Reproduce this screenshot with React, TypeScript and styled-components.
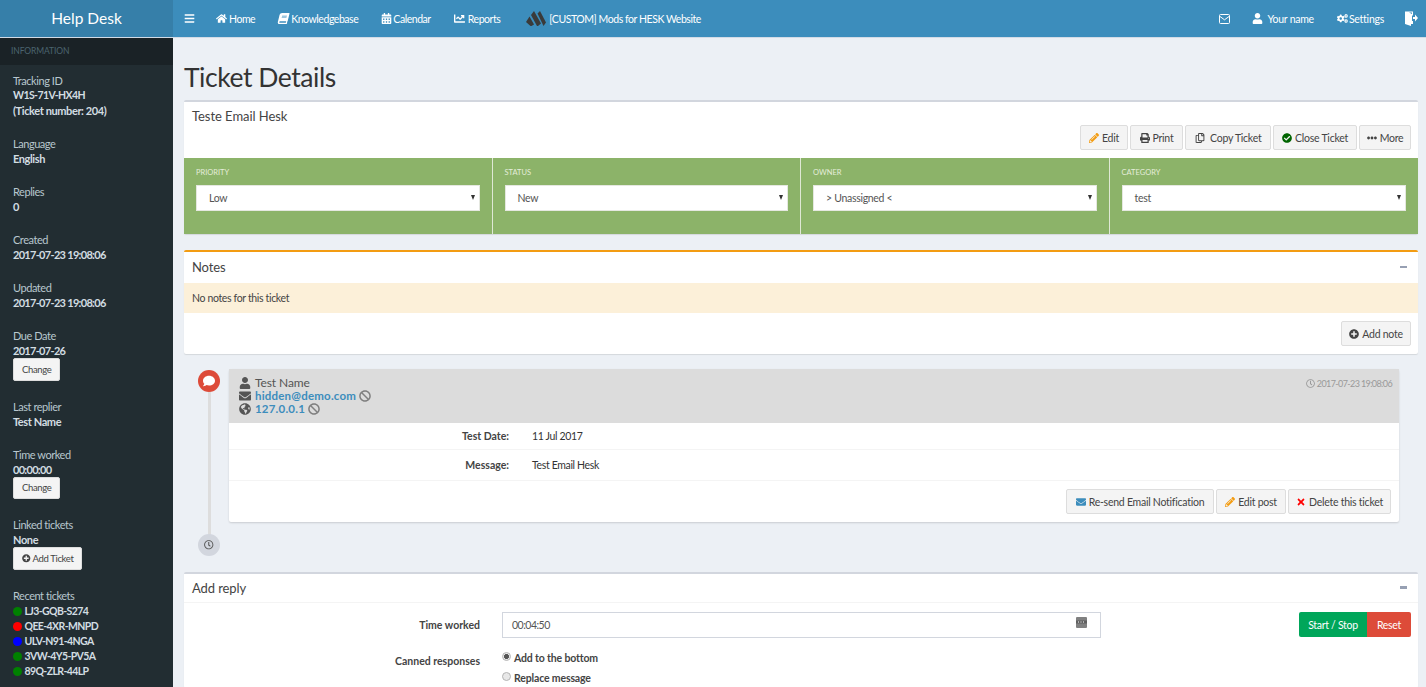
import React from 'react'
import styled, { createGlobalStyle } from 'styled-components'
import {
  FaBars, FaHome, FaBook, FaCalendarAlt, FaChartLine, FaUser, FaCogs, FaPencilAlt, FaPrint, FaRegCopy,
  FaCheckCircle, FaEllipsisH, FaPlusCircle, FaTimes, FaComment, FaRegClock, FaGlobeAmericas, FaBan, FaEnvelope,
} from 'react-icons/fa'

const GlobalStyle = createGlobalStyle`
  html, body {
    margin: 0;
    height: 100%;
    overflow: hidden;
    background: #ecf0f5;
    font-family: Lato, "Liberation Sans", sans-serif;
    font-size: 11.5px;
    color: #333;
  }
  * { box-sizing: border-box; }
`

const Page = styled.div`
  height: 687px;
  overflow: hidden;
  display: flex;
  flex-direction: column;
`

const TopBar = styled.header`
  flex: none;
  height: 38px;
  display: flex;
  background: #3c8dbc;
  border-bottom: 1px solid #d2dbe6;
  color: #fff;
`

const Brand = styled.div`
  width: 173px;
  background: #367fa9;
  font-size: 15.5px;
  text-align: center;
  line-height: 36px;
`

const NavList = styled.nav`
  flex: 1;
  display: flex;
  align-items: center;
  padding: 0 8px 0 11px;
  font-size: 10.5px;
  letter-spacing: -0.45px;
`

const NavItem = styled.span<{ $gap?: number; $iconGap?: number; $wide?: boolean }>`
  display: inline-flex;
  align-items: center;
  gap: ${p => p.$iconGap ?? 2}px;
  margin-right: ${p => p.$gap ?? 23}px;
  white-space: nowrap;
  ${p => (p.$wide ? 'letter-spacing: -0.25px;' : '')}
  & > svg { height: 11px; width: auto; }
`

const SlantBook = styled(FaBook)`
  transform: skewX(-14deg);
`

const Spacer = styled.div`
  flex: 1;
`

const Body = styled.div`
  flex: 1;
  display: flex;
  min-height: 0;
`

const Sidebar = styled.aside`
  flex: none;
  width: 173px;
  background: #222d32;
  color: #b8c7ce;
`

const SideHeading = styled.div`
  height: 27px;
  line-height: 27px;
  padding-left: 11px;
  background: #1a2226;
  color: #4b646f;
  font-size: 8.5px;
  letter-spacing: -0.1px;
  text-transform: uppercase;
  margin-bottom: 8px;
`

const SideBlock = styled.div`
  padding: 0 13px;
  margin-bottom: 18px;
  line-height: 15px;
  font-size: 11px;
  letter-spacing: -0.45px;
`

const SideValue = styled.div<{ $tight?: boolean }>`
  font-weight: 700;
  color: #d3dde2;
  display: flex;
  align-items: center;
  gap: 2.5px;
  white-space: nowrap;
  letter-spacing: ${p => (p.$tight ? -0.7 : -0.4)}px;
`

const TicketCode = styled(SideValue)`
  font-size: 10.5px;
  letter-spacing: -0.6px;
`

const CodeList = styled.div`
  padding-top: 1px;
`

const Dot = styled.span<{ $color: string }>`
  flex: none;
  width: 9px;
  height: 9px;
  border-radius: 50%;
  background: ${p => p.$color};
`

const SmallButton = styled.button`
  display: flex;
  align-items: center;
  gap: 2px;
  height: 22.5px;
  margin: 0;
  padding: 0 8px;
  background: #f4f4f4;
  border: 1px solid #ddd;
  border-radius: 2px;
  color: #444;
  font: 400 9.5px Lato, sans-serif;
  letter-spacing: -0.35px;
  svg { width: 8.5px; height: 8.5px; }
`

const Main = styled.main`
  flex: 1;
  padding: 0 8px 0 11px;
  min-width: 0;
`

const Title = styled.h1`
  margin: 0;
  padding-top: 23px;
  height: 62px;
  font-size: 26.5px;
  line-height: 32px;
  font-weight: 400;
  letter-spacing: -0.45px;
  color: #333;
`

const Box = styled.section<{ $accent?: string; $gap?: number }>`
  background: #fff;
  border-top: 2px solid ${p => p.$accent ?? '#d2d6de'};
  box-shadow: 0 1px 1px rgba(0, 0, 0, 0.1);
  margin-bottom: ${p => p.$gap ?? 16}px;
  border-radius: 2px;
`

const TicketTop = styled.div`
  height: 56px;
  padding: 6px 7px 0 8px;
  font-size: 13px;
  letter-spacing: -0.05px;
  color: #444;
  display: flex;
  flex-direction: column;
`

const ButtonRow = styled.div`
  display: flex;
  justify-content: flex-end;
  gap: 2px;
  margin-top: 1px;
`

const ActionButton = styled.button<{ $w: number }>`
  height: 25px;
  width: ${p => p.$w}px;
  padding: 0;
  display: inline-flex;
  align-items: center;
  justify-content: center;
  gap: 3px;
  background: #f4f4f4;
  border: 1px solid #ddd;
  border-radius: 2px;
  color: #444;
  font: 400 10.5px Lato, sans-serif;
  letter-spacing: -0.25px;
  white-space: nowrap;
  svg { height: 10px; width: auto; }
`

const Tint = styled.span<{ $color: string }>`
  display: inline-flex;
  color: ${p => p.$color};
`

const GreenRow = styled.div`
  display: grid;
  grid-template-columns: repeat(4, 1fr);
  height: 76px;
  background: #8cb369;
`

const FieldCell = styled.div`
  padding: 10px 12px 0;
  border-right: 1px solid #dfe8d5;
  &:last-child { border-right: 0; }
`

const FieldLabel = styled.div`
  color: #e4edda;
  font-size: 7.5px;
  line-height: 9px;
  text-transform: uppercase;
  margin-bottom: 8px;
`

const FakeSelect = styled.div`
  position: relative;
  height: 26px;
  line-height: 25px;
  padding-left: 12px;
  background: #fff;
  border: 1px solid #e5e8e0;
  color: #555;
  font-size: 10.5px;
  letter-spacing: -0.3px;
  &::after {
    content: '';
    position: absolute;
    right: 4px;
    top: 9px;
    border: 2.5px solid transparent;
    border-top: 5px solid #333;
  }
`

const BoxHeader = styled.div<{ $line?: boolean }>`
  height: ${p => (p.$line ? 29 : 31)}px;
  padding: 0 11px 1px 8px;
  display: flex;
  align-items: center;
  justify-content: space-between;
  font-size: 13px;
  letter-spacing: -0.1px;
  color: #444;
  border-bottom: ${p => (p.$line ? '1px solid #f4f4f4' : '0')};
`

const MinusMark = styled.span`
  width: 7.5px;
  height: 2.5px;
  background: #97a0b3;
`

const NotesRow = styled.div`
  height: 30px;
  line-height: 30px;
  padding-left: 8px;
  background: #fcf0d9;
  font-size: 10.5px;
  letter-spacing: -0.35px;
  color: #444;
`

const NotesFoot = styled.div`
  height: 41px;
  padding: 8px 7px 0;
  display: flex;
  justify-content: flex-end;
`

const Timeline = styled.div`
  position: relative;
  padding: 0 19px 0 45px;
  height: 203px;
  &::before {
    content: '';
    position: absolute;
    left: 23.5px;
    top: 12px;
    width: 3px;
    height: 156px;
    background: #ddd;
  }
`

const TimelineDot = styled.div<{ $color: string; $top: number; $fg: string; $size: number }>`
  position: absolute;
  left: 14px;
  top: ${p => p.$top}px;
  width: 22px;
  height: 22px;
  border-radius: 50%;
  background: ${p => p.$color};
  color: ${p => p.$fg};
  font-size: ${p => p.$size}px;
  display: flex;
  align-items: center;
  justify-content: center;
`

const Card = styled.article`
  background: #fff;
  box-shadow: 0 1px 2px rgba(0, 0, 0, 0.15);
  border-radius: 2px;
`

const CardHead = styled.div`
  height: 54px;
  padding: 7px 7px 0 10px;
  background: #dcdcdc;
  display: flex;
  justify-content: space-between;
`

const ContactLine = styled.div`
  display: flex;
  align-items: center;
  gap: 3px;
  height: 13px;
  font-size: 12px;
  letter-spacing: -0.1px;
  color: #555;
  & > svg:first-child { width: 12px; height: 12px; margin-right: 1px; }
`

const ContactLink = styled.a`
  color: #3c8dbc;
  font-weight: 700;
  font-size: 11.5px;
  letter-spacing: 0.2px;
`

const Stamp = styled.div`
  display: flex;
  align-items: center;
  gap: 2px;
  height: 14px;
  color: #999;
  font-size: 9px;
  letter-spacing: -0.6px;
`

const InfoRow = styled.div<{ $h: number }>`
  height: ${p => p.$h}px;
  display: grid;
  grid-template-columns: 280px 1fr;
  column-gap: 23px;
  align-items: center;
  border-bottom: 1px solid #f4f4f4;
  font-size: 10.5px;
  letter-spacing: -0.35px;
`

const FieldName = styled.div`
  text-align: right;
  font-weight: 700;
  color: #444;
  font-size: 10.5px;
  letter-spacing: 0;
`

const CardFoot = styled.div`
  padding: 7px 8px 8px;
`

const ReplyRow = styled.div`
  display: grid;
  grid-template-columns: 296px 599px 1fr;
  column-gap: 22px;
  align-items: center;
  height: 25px;
  margin-top: 9px;
`

const TimeInput = styled.div`
  height: 25.5px;
  padding: 0 13px 0 9px;
  display: flex;
  align-items: center;
  justify-content: space-between;
  border: 1px solid #d2d6de;
  font-size: 10.5px;
  letter-spacing: -0.5px;
  color: #555;
`

const TimerButtons = styled.div`
  display: flex;
  justify-content: flex-end;
  padding-right: 7px;
`

const TimerButton = styled.button<{ $color: string; $w: number }>`
  width: ${p => p.$w}px;
  height: 25px;
  border: 0;
  padding: 0;
  background: ${p => p.$color};
  color: #fff;
  font: 400 10.5px Lato, sans-serif;
  letter-spacing: -0.3px;
  &:first-child { border-radius: 2px 0 0 2px; }
  &:last-child { border-radius: 0 2px 2px 0; }
`

const CannedRow = styled.div`
  display: grid;
  grid-template-columns: 296px 1fr;
  column-gap: 22px;
  margin-top: 11px;
`

const CannedName = styled(FieldName)`
  padding-top: 7px;
`

const RadioGroup = styled.div`
  display: flex;
  flex-direction: column;
`

const RadioLine = styled.label`
  display: flex;
  align-items: center;
  gap: 3px;
  height: 20px;
  font-weight: 700;
  font-size: 10.5px;
  letter-spacing: -0.15px;
  color: #444;
`

const RadioInput = styled.input`
  appearance: none;
  margin: 0;
  width: 9px;
  height: 9px;
  position: relative;
  top: -1.5px;
  border: 1px solid #b4b4b4;
  border-radius: 50%;
  background: #e8e8e8;
  &:checked { background: radial-gradient(circle, #555 0 2.2px, #e8e8e8 2.8px); }
`

const DoorSvg = styled.svg`
  && { width: 13px; height: 15px; }
`

const LogoSvg = styled.svg`
  && { width: 20px; height: 15px; margin-right: 1px; }
`

const InboxSvg = styled.svg`
  && { width: 11px; height: 10px; }
`

const Door = () => (
  <DoorSvg viewBox="0 0 13 15" fill="#fff">
    <path d="M0 0.5h8v4H7V1.5H4L7 3v7h1v3H6v2L0 13z" />
    <path d="M8 6h2V3.5L13 7l-3 3.5V8H8z" />
  </DoorSvg>
)

const ModsLogo = () => (
  <LogoSvg viewBox="0 0 20 15" fill="#3a3a3a">
    <path d="M0 11 3.5 5.5 8 13.5 5.5 15H4.5z" />
    <path d="M5 4 8 0 15 12.5 12 15H11z" />
    <path d="M11.5 2.5 14 0 20 11.5 17.5 15z" />
  </LogoSvg>
)

const InboxIcon = () => (
  <InboxSvg viewBox="0 0 11 10" fill="none" stroke="#fff" strokeWidth="1">
    <rect x="0.5" y="0.5" width="10" height="9" rx="1" />
    <path d="M1 2.5 5.5 5.8 10 2.5" />
  </InboxSvg>
)

const PickerIcon = () => (
  <svg width="11" height="11" viewBox="0 0 11 11" style={{ marginTop: -4 }}>
    <rect width="11" height="11" rx="1" fill="#808080" />
    <rect y="3.5" width="11" height="3" fill="#5f5f5f" />
    <path d="M2 5h1M4.5 5h1M7 5h1" stroke="#fff" strokeWidth="1" />
  </svg>
)

const recent: [string, string][] = [
  ['green', 'LJ3-GQB-S274'],
  ['red', 'QEE-4XR-MNPD'],
  ['blue', 'ULV-N91-4NGA'],
  ['green', '3VW-4Y5-PV5A'],
  ['green', '89Q-ZLR-44LP'],
]

const fields: [string, string][] = [
  ['Priority', 'Low'],
  ['Status', 'New'],
  ['Owner', '> Unassigned <'],
  ['Category', 'test'],
]

export default function App() {
  return (
    <Page>
      <GlobalStyle />
      <TopBar>
        <Brand>Help Desk</Brand>
        <NavList>
          <NavItem $gap={21}><FaBars /></NavItem>
          <NavItem><FaHome />Home</NavItem>
          <NavItem><SlantBook />Knowledgebase</NavItem>
          <NavItem $iconGap={1}><FaCalendarAlt />Calendar</NavItem>
          <NavItem $gap={26} $iconGap={3}><FaChartLine />Reports</NavItem>
          <NavItem><ModsLogo />[CUSTOM] Mods for HESK Website</NavItem>
          <Spacer />
          <NavItem $gap={22}><InboxIcon /></NavItem>
          <NavItem $wide><FaUser />&nbsp;Your name</NavItem>
          <NavItem $gap={21} $iconGap={1} $wide><FaCogs />Settings</NavItem>
          <NavItem $gap={0}><Door /></NavItem>
        </NavList>
      </TopBar>
      <Body>
        <Sidebar>
          <SideHeading>Information</SideHeading>
          <SideBlock>Tracking ID<TicketCode>W1S-71V-HX4H</TicketCode><SideValue>(Ticket number: 204)</SideValue></SideBlock>
          <SideBlock>Language<SideValue>English</SideValue></SideBlock>
          <SideBlock>Replies<SideValue>0</SideValue></SideBlock>
          <SideBlock>Created<SideValue $tight>2017-07-23 19:08:06</SideValue></SideBlock>
          <SideBlock>Updated<SideValue $tight>2017-07-23 19:08:06</SideValue></SideBlock>
          <SideBlock>Due Date<SideValue $tight>2017-07-26</SideValue><SmallButton>Change</SmallButton></SideBlock>
          <SideBlock>Last replier<SideValue>Test Name</SideValue></SideBlock>
          <SideBlock>Time worked<SideValue $tight>00:00:00</SideValue><SmallButton>Change</SmallButton></SideBlock>
          <SideBlock>Linked tickets<SideValue>None</SideValue><SmallButton><FaPlusCircle />Add Ticket</SmallButton></SideBlock>
          <SideBlock>
            Recent tickets
            <CodeList>
              {recent.map(([color, id]) => (
                <TicketCode key={id}><Dot $color={color} />{id}</TicketCode>
              ))}
            </CodeList>
          </SideBlock>
        </Sidebar>
        <Main>
          <Title>Ticket Details</Title>
          <Box>
            <TicketTop>
              Teste Email Hesk
              <ButtonRow>
                <ActionButton $w={48}><Tint $color="#f39c12"><FaPencilAlt /></Tint>Edit</ActionButton>
                <ActionButton $w={53}><FaPrint />Print</ActionButton>
                <ActionButton $w={86}><FaRegCopy />&nbsp;Copy Ticket</ActionButton>
                <ActionButton $w={84}><Tint $color="#006400"><FaCheckCircle /></Tint>Close Ticket</ActionButton>
                <ActionButton $w={52}><FaEllipsisH />More</ActionButton>
              </ButtonRow>
            </TicketTop>
            <GreenRow>
              {fields.map(([label, value]) => (
                <FieldCell key={label}>
                  <FieldLabel>{label}</FieldLabel>
                  <FakeSelect>{value}</FakeSelect>
                </FieldCell>
              ))}
            </GreenRow>
          </Box>
          <Box $accent="#f39c12" $gap={15}>
            <BoxHeader>Notes<MinusMark /></BoxHeader>
            <NotesRow>No notes for this ticket</NotesRow>
            <NotesFoot>
              <ActionButton $w={70}><FaPlusCircle />Add note</ActionButton>
            </NotesFoot>
          </Box>
          <Timeline>
            <TimelineDot $color="#dd4b39" $fg="#fff" $top={1} $size={12}><FaComment /></TimelineDot>
            <TimelineDot $color="#d2d6de" $fg="#555" $top={165} $size={9.5}><FaRegClock /></TimelineDot>
            <Card>
              <CardHead>
                <div>
                  <ContactLine><FaUser />Test Name</ContactLine>
                  <ContactLine><FaEnvelope /><ContactLink>hidden@demo.com</ContactLink><FaBan color="#808080" /></ContactLine>
                  <ContactLine><FaGlobeAmericas /><ContactLink>127.0.0.1</ContactLink><FaBan color="#808080" /></ContactLine>
                </div>
                <Stamp><FaRegClock />2017-07-23 19:08:06</Stamp>
              </CardHead>
              <InfoRow $h={27}><FieldName>Test Date:</FieldName>11 Jul 2017</InfoRow>
              <InfoRow $h={31}><FieldName>Message:</FieldName>Test Email Hesk</InfoRow>
              <CardFoot>
                <ButtonRow>
                  <ActionButton $w={148}><Tint $color="#3c8dbc"><FaEnvelope /></Tint>Re-send Email Notification</ActionButton>
                  <ActionButton $w={70}><Tint $color="#f39c12"><FaPencilAlt /></Tint>Edit post</ActionButton>
                  <ActionButton $w={103}><Tint $color="#f00"><FaTimes /></Tint>Delete this ticket</ActionButton>
                </ButtonRow>
              </CardFoot>
            </Card>
          </Timeline>
          <Box $gap={0}>
            <BoxHeader $line>Add reply<MinusMark /></BoxHeader>
            <ReplyRow>
              <FieldName>Time worked</FieldName>
              <TimeInput>00:04:50<PickerIcon /></TimeInput>
              <TimerButtons>
                <TimerButton $color="#00a65a" $w={68}>Start / Stop</TimerButton>
                <TimerButton $color="#dd4b39" $w={44}>Reset</TimerButton>
              </TimerButtons>
            </ReplyRow>
            <CannedRow>
              <CannedName>Canned responses</CannedName>
              <RadioGroup>
                <RadioLine><RadioInput type="radio" name="canned" defaultChecked />Add to the bottom</RadioLine>
                <RadioLine><RadioInput type="radio" name="canned" />Replace message</RadioLine>
              </RadioGroup>
            </CannedRow>
          </Box>
        </Main>
      </Body>
    </Page>
  )
}
